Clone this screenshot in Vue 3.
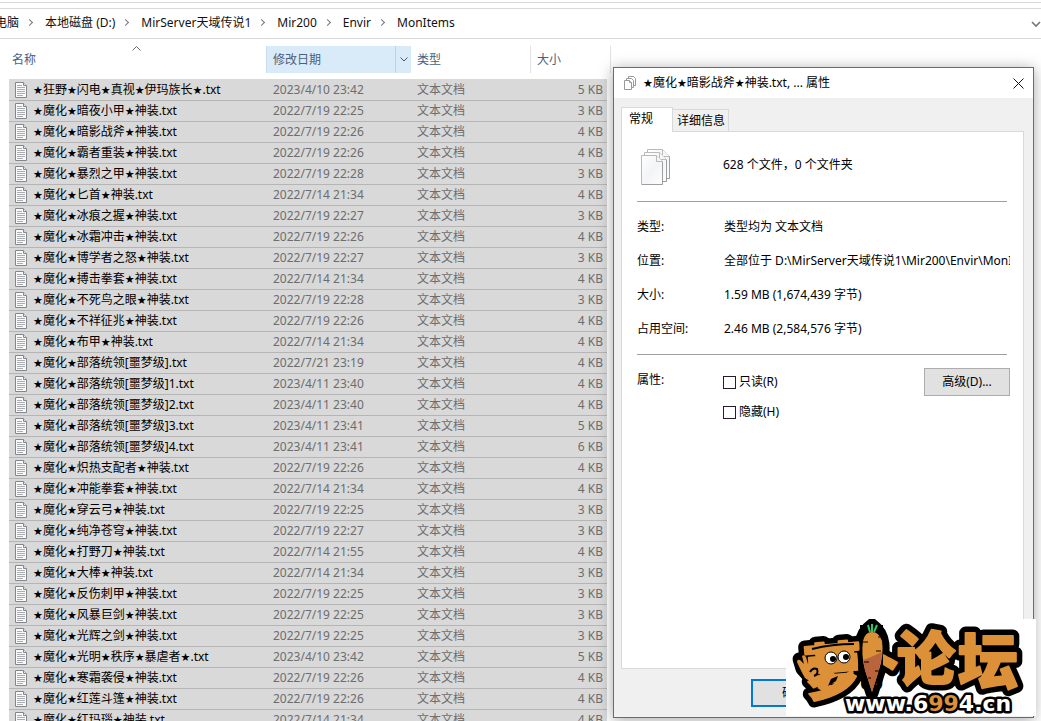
<script setup>
const crumbs = ['电脑', '本地磁盘 (D:)', 'MirServer天域传说1', 'Mir200', 'Envir', 'MonItems']

const files = [
  ['★狂野★闪电★真视★伊玛族长★.txt', '2023/4/10 23:42', 5],
  ['★魔化★暗夜小甲★神装.txt', '2022/7/19 22:25', 3],
  ['★魔化★暗影战斧★神装.txt', '2022/7/19 22:26', 4],
  ['★魔化★霸者重装★神装.txt', '2022/7/19 22:26', 4],
  ['★魔化★暴烈之甲★神装.txt', '2022/7/19 22:28', 3],
  ['★魔化★匕首★神装.txt', '2022/7/14 21:34', 4],
  ['★魔化★冰痕之握★神装.txt', '2022/7/19 22:27', 3],
  ['★魔化★冰霜冲击★神装.txt', '2022/7/19 22:26', 4],
  ['★魔化★博学者之怒★神装.txt', '2022/7/19 22:27', 3],
  ['★魔化★搏击拳套★神装.txt', '2022/7/14 21:34', 4],
  ['★魔化★不死鸟之眼★神装.txt', '2022/7/19 22:28', 3],
  ['★魔化★不祥征兆★神装.txt', '2022/7/19 22:26', 4],
  ['★魔化★布甲★神装.txt', '2022/7/14 21:34', 4],
  ['★魔化★部落统领[噩梦级].txt', '2022/7/21 23:19', 4],
  ['★魔化★部落统领[噩梦级]1.txt', '2023/4/11 23:40', 4],
  ['★魔化★部落统领[噩梦级]2.txt', '2023/4/11 23:40', 4],
  ['★魔化★部落统领[噩梦级]3.txt', '2023/4/11 23:41', 5],
  ['★魔化★部落统领[噩梦级]4.txt', '2023/4/11 23:41', 6],
  ['★魔化★炽热支配者★神装.txt', '2022/7/19 22:26', 4],
  ['★魔化★冲能拳套★神装.txt', '2022/7/14 21:34', 4],
  ['★魔化★穿云弓★神装.txt', '2022/7/19 22:25', 3],
  ['★魔化★纯净苍穹★神装.txt', '2022/7/19 22:27', 3],
  ['★魔化★打野刀★神装.txt', '2022/7/14 21:55', 4],
  ['★魔化★大棒★神装.txt', '2022/7/14 21:34', 3],
  ['★魔化★反伤刺甲★神装.txt', '2022/7/19 22:25', 3],
  ['★魔化★风暴巨剑★神装.txt', '2022/7/19 22:25', 3],
  ['★魔化★光辉之剑★神装.txt', '2022/7/19 22:25', 3],
  ['★魔化★光明★秩序★暴虐者★.txt', '2023/4/10 23:42', 5],
  ['★魔化★寒霜袭侵★神装.txt', '2022/7/19 22:26', 4],
  ['★魔化★红莲斗篷★神装.txt', '2022/7/19 22:26', 4],
  ['★魔化★红玛瑙★神装.txt', '2022/7/14 21:34', 4],
]

const details = [
  ['类型:', '类型均为 文本文档'],
  ['位置:', '全部位于 D:\\MirServer天域传说1\\Mir200\\Envir\\MonItems'],
  ['大小:', '1.59 MB (1,674,439 字节)'],
  ['占用空间:', '2.46 MB (2,584,576 字节)'],
]

// Stars are set a little smaller than the rest of a file name.
const parts = (name) => name.split(/(★)/).filter(Boolean)
</script>

<template>
  <div class="page">
    <div class="strip"></div>
    <nav class="address">
      <ol class="crumbs">
        <li v-for="c in crumbs" :key="c"><a href="#">{{ c }}</a></li>
      </ol>
      <button class="history" aria-label="历史记录">
        <svg width="10" height="8" viewBox="0 0 10 8"><path d="M1 2l4 4 4-4" fill="none" stroke="#777" stroke-width="1.6" /></svg>
      </button>
    </nav>

    <table class="files">
      <colgroup>
        <col class="c-name" /><col class="c-date" /><col class="c-type" /><col class="c-size" /><col class="c-end" />
      </colgroup>
      <thead>
        <tr>
          <th class="name-head">名称
            <svg class="sort" width="9" height="5" viewBox="0 0 9 5"><path d="M.5 4.5l4-4 4 4" fill="none" stroke="#666" /></svg>
          </th>
          <th class="active">
            <div class="date-head">
              <span>修改日期</span>
              <button aria-label="筛选">
                <svg width="8" height="5" viewBox="0 0 8 5"><path d="M.5 .5L4 4 7.500 .5" fill="none" stroke="#555" /></svg>
              </button>
            </div>
          </th>
          <th>类型</th>
          <th class="line">大小</th>
          <th class="edge"></th>
        </tr>
      </thead>
      <tbody>
        <tr v-for="f in files" :key="f[0]">
          <td>
            <div class="file">
              <svg width="12" height="16" viewBox="0 0 12 16">
                <path d="M.5 .5h8l3 3v12H.5z" fill="#fafafa" stroke="#83878c" />
                <path d="M8.500 .5v3h3" fill="#e4e6e8" stroke="#83878c" />
                <path d="M2 3.500h5M2 5.500h8M2 7.500h8M2 9.500h8M2 11.500h8M2 13.500h6" stroke="#a9adb1" />
              </svg>
              <span><span v-for="(p, i) in parts(f[0])" :key="i" :class="{ star: p === '★' }">{{ p }}</span></span>
            </div>
          </td>
          <td>{{ f[1] }}</td>
          <td class="type">文本文档</td>
          <td class="size">{{ f[2] }} KB</td>
          <td class="blank"></td>
        </tr>
      </tbody>
    </table>

    <section class="dialog" role="dialog" aria-labelledby="dlg-title">
      <header class="titlebar">
        <svg width="12" height="14" viewBox="0 0 12 14" fill="#fff" stroke="#999">
          <path d="M4.500 .5h5l2 2v7h-7z" />
          <path d="M2.500 2.500h5l2 2v7h-7z" />
          <path d="M.5 4.500h5l2 2v7h-7z" />
          <path d="M5.500 4.500v2h2" />
        </svg>
        <h1 id="dlg-title"><span v-for="(p, i) in parts('★魔化★暗影战斧★神装.txt, ... 属性')" :key="i" :class="{ star: p === '★' }">{{ p }}</span></h1>
        <button class="close" aria-label="关闭">
          <svg width="11" height="11" viewBox="0 0 11 11"><path d="M.5 .5l10 10M10.500 .5l-10 10" stroke="#111" /></svg>
        </button>
      </header>

      <div class="body">
        <div class="tabs" role="tablist">
          <button class="tab on" role="tab" aria-selected="true">常规</button>
          <button class="tab" role="tab" aria-selected="false">详细信息</button>
        </div>
        <div class="panel" role="tabpanel">
          <div class="summary">
            <svg width="32" height="38" viewBox="0 0 32 38">
              <defs>
                <linearGradient id="sheet" x1="0" y1="0" x2="1" y2="1">
                  <stop offset="0" stop-color="#fff" /><stop offset=".5" stop-color="#f3f4f6" /><stop offset="1" stop-color="#fdfdfd" />
                </linearGradient>
              </defs>
              <g fill="url(#sheet)" stroke="#b9b9b9">
                <path d="M8.500 1.500h15l7 7v22h-22z" />
                <path d="M23.500 1.500v7h7" />
                <path d="M5.500 4.500h15l7 7v22h-22z" />
                <path d="M20.500 4.500v7h7" />
                <path d="M2.500 7.500h15l6 6v23h-21z" />
                <path d="M17.500 7.500v6h6" />
              </g>
              <path d="M3 36.500h20.500V14M24 33.500h3.500V12M28 30.500h2.500V9" fill="none" stroke="#8c8c8c" opacity=".6" />
            </svg>
            <p>628 个文件，0 个文件夹</p>
          </div>
          <hr />
          <dl>
            <div v-for="d in details" :key="d[0]"><dt>{{ d[0] }}</dt><dd>{{ d[1] }}</dd></div>
          </dl>
          <hr />
          <div class="attrs">
            <span class="attr-name">属性:</span>
            <div class="checks">
              <label><input type="checkbox" />只读(R)</label>
              <label><input type="checkbox" />隐藏(H)</label>
            </div>
            <button class="advanced">高级(D)...</button>
          </div>
        </div>
        <footer class="actions"><button class="ok">确定</button></footer>
      </div>
    </section>

    <svg class="logo" width="250" height="97" viewBox="0 0 250 97" role="img" aria-label="萝卜论坛 www.6994.cn">
      <defs>
        <g id="name">
          <text class="luo" x="17" y="74" transform="rotate(-5 48 45)">萝</text>
          <text class="bo" x="66" y="60">卜</text>
          <text class="lun" x="111" y="61">论</text>
          <text class="tan" x="172" y="65">坛</text>
        </g>
      </defs>
      <rect width="250" height="97" fill="#fff" />
      <g class="under">
        <use href="#name" />
        <path d="M86 6C72 16 74 32 77 46l9 28 9-28c3-14 5-30-9-40z" />
        <path d="M13 40l3 10 8 9 10 1" />
        <path d="M58 62l-24 17" />
      </g>
      <use class="over" href="#name" />
      <!-- face, tail and waving hand of the mascot -->
      <path d="M30 34q18-6 38-4l1 15q-20 8-38 4z" fill="#dc9138" />
      <path d="M66 50q4 5-2 12-12 13-28 19-5 1-5-5 14-8 24-18z" fill="#dc9138" />
      <path d="M26 30q20-5 42-5" fill="none" stroke="#000" stroke-width="2" />
      <path d="M45 60l7-3-2 5-8 5z" />
      <path d="M11 43q0-3 3-2l4 4-2-8q2-2 4 1l2 7 2-5q3-1 3 2l-2 8q4 1 3 5 2 2 6 1l2 5q-10 4-17-2-3-5-8-16z" fill="#dc9138" />
      <path d="M24 53q3-5 7-3 2 5-3 7" fill="none" stroke="#000" stroke-width="2" />
      <path d="M74 26V6h23v44L86 76 72 50z" fill="#000" />
      <path d="M77 22Q79 13 86 13t10 9q2 14-3 29l-7 22-7-22q-4-15-2-29z" fill="#dc9138" />
      <path d="M77 41l8-3 11-5q-1 13-6 27l-4 13-7-22z" fill="#b9643c" />
      <path d="M77 23h5M92 18h4M90 32h5M78 43h5M89 52h4M82 59h3" stroke="#000" stroke-width="1" />
      <path d="M82 6l2 7M86 5v8M91 6l-3 7" stroke="#2fc46b" stroke-width="2" />
      <ellipse cx="45" cy="39" rx="6" ry="6" fill="#fff" stroke="#000" />
      <ellipse cx="58" cy="38" rx="6" ry="6" fill="#fff" stroke="#000" />
      <circle cx="47" cy="40" r="3" />
      <circle cx="60" cy="38" r="3" />
      <text class="url" x="59" y="92">www.6<tspan fill="#dc9138">99</tspan>4.cn</text>
    </svg>
  </div>
</template>

<style>
body { margin: 0; }
</style>

<style scoped>
.page {
  position: relative;
  height: 100vh;
  padding-top: 2px;
  box-sizing: border-box;
  overflow: hidden;
  background: #fff;
  color: #000;
  font: 12px/16px "Noto Sans", "DejaVu Sans", "Noto Sans CJK SC", sans-serif;
}
button, input { font: inherit; color: inherit; margin: 0; padding: 0; }
.star { font-size: 11px; }
.strip { height: 5px; border-top: 1px solid #d9d9d9; border-bottom: 1px solid #d9d9d9; }
.address { display: flex; align-items: center; justify-content: space-between; height: 29px; border-bottom: 1px solid #d9d9d9; }
.crumbs { display: flex; margin: 0 0 2px -5px; padding: 0; list-style: none; }
.crumbs li { display: flex; align-items: center; white-space: nowrap; }
.crumbs a { color: #111; text-decoration: none; }
.crumbs li + li::before {
  content: ""; width: 4px; height: 4px; margin: 0 13px 0 8px;
  border: solid #777; border-width: 1px 1px 0 0; transform: rotate(45deg);
}
.history { border: 0; background: none; width: 10px; height: 20px; }
.history svg { display: block; }

.files { width: 602px; margin: 7px 0 0 9px; border-collapse: separate; border-spacing: 0; table-layout: fixed; }
.c-name { width: 257px; }
.c-date { width: 145px; }
.c-type { width: 119px; }
.c-size { width: 77px; }
.c-end { width: 4px; }
th { height: 27px; padding: 0 6px; text-align: left; font-weight: 400; color: #4c607a; }
.name-head { position: relative; padding-left: 3px; }
.sort { position: absolute; left: 123px; top: 0; }
th.active { padding: 0; background: #d9ebf9; }
.date-head { display: flex; justify-content: space-between; align-items: center; height: 27px; padding-left: 6px; border-left: 1px solid #c8dcec; }
.date-head button { width: 16px; height: 27px; border: 0; border-left: 1px solid #bcd3e4; background: none; }
.date-head svg { display: block; margin: auto; }
th.line { border-left: 1px solid #e2e2e2; }
th.edge { padding: 0; border-right: 1px solid #e2e2e2; }
tbody::before { content: ""; display: block; height: 6px; }
td { height: 20px; padding: 0 7px; border-top: 1px solid #b5b5b5; background: #d9d9d9; color: #6d6d6d; white-space: nowrap; }
tbody tr:first-child td { border-top-color: #d9d9d9; }
td:first-child { padding-left: 6px; color: #000; }
td.type { padding-left: 6px; }
td.size { text-align: right; padding-right: 4px; }
tbody tr td.blank { padding: 0; border: 0; background: none; }
.file { display: flex; align-items: center; gap: 6px; height: 20px; }

.dialog {
  position: absolute; left: 613px; right: 7px; top: 67px; bottom: 3px;
  display: flex; flex-direction: column; box-sizing: border-box;
  border: 1px solid #6b6b6b; background: #f0f0f0; box-shadow: 0 2px 14px rgba(0, 0, 0, .35);
}
.titlebar { display: flex; align-items: center; height: 30px; padding: 0 8px 0 10px; gap: 7px; background: #fff; }
.titlebar h1 { margin: 0; font-size: 12px; font-weight: 400; flex: 1; white-space: nowrap; }
.close { width: 13px; height: 20px; border: 0; background: none; }
.close svg { display: block; margin: auto; }
.body { flex: 1; display: flex; flex-direction: column; padding: 9px 9px 0 7px; }
.tabs { display: flex; align-items: flex-end; height: 24px; }
.tab { height: 22px; padding: 0 3px 0 4px; border: 1px solid #d9d9d9; border-left: 0; border-bottom: 0; background: #f0f0f0; }
.tab.on { position: relative; z-index: 1; height: 25px; margin-bottom: -1px; padding: 0 19px 2px 7px; border-left: 1px solid #d9d9d9; background: #fff; }
.panel { flex: 1; border: 1px solid #d9d9d9; background: #fff; padding: 0 13px 0 15px; }
.summary { display: flex; align-items: center; height: 67px; padding: 2px 0 0 2px; box-sizing: border-box; }
.summary p { margin: 0 0 4px 52px; }
hr { margin: 2px 3px 0 0; border: 0; border-top: 1px solid #a0a0a0; }
dl { margin: 8px 0 0; }
dl div { display: flex; align-items: center; height: 34px; }
dt { width: 87px; flex: none; }
dd { margin: 0; overflow: hidden; white-space: nowrap; }
dl + hr { margin-top: 8px; }
.attrs { display: flex; align-items: flex-start; padding-top: 13px; }
.attr-name { width: 86px; padding-top: 4px; }
.checks { flex: 1; display: grid; gap: 14px; padding-top: 6px; }
.checks label { display: flex; align-items: center; gap: 3px; }
.checks input { appearance: none; width: 13px; height: 13px; border: 1px solid #2a1a2a; background: #fff; }
.advanced { width: 86px; height: 28px; border: 1px solid #adadad; background: #e1e1e1; }
.actions { height: 48px; padding: 10px 0 0 130px; box-sizing: border-box; }
.ok { width: 86px; height: 28px; border: 2px solid #0078d7; background: #e1e1e1; }

.logo { position: absolute; right: 5px; bottom: 5px; font-family: "Noto Sans CJK SC", sans-serif; font-weight: 900; }
.luo { font-size: 60px; }
.bo { font-size: 48px; }
.lun { font-size: 58px; }
.tan { font-size: 60px; }
.under { fill: #000; stroke: #000; stroke-width: 13px; stroke-linejoin: round; stroke-linecap: round; }
.over { fill: #dc9138; stroke: #dc9138; stroke-width: 2px; stroke-linejoin: round; }
.url { font: 700 22px "DejaVu Sans", sans-serif; fill: #fff; stroke: #000; stroke-width: 5px; stroke-linejoin: round; paint-order: stroke; }
</style>
